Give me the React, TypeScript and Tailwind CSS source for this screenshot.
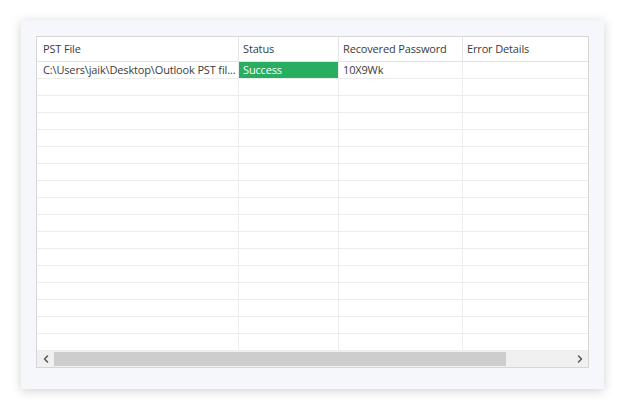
import { ChevronLeft, ChevronRight } from 'lucide-react'

export default function App() {
  const columns = [
    { title: 'PST File', width: 'w-[202px]', pad: 'pl-[6px]' },
    { title: 'Status', width: 'w-[100px]', pad: 'pl-[4px]' },
    { title: 'Recovered Password', width: 'w-[124px]', pad: 'pl-[4px]' },
    { title: 'Error Details', width: 'flex-1', pad: 'pl-[4px]' },
  ]
  const emptyRows = Array.from({ length: 16 })

  return (
    <div className="w-[624px] h-[409px] bg-white pt-[20px] pl-[21px] font-['Open_Sans',sans-serif] text-[11px] tracking-[-0.15px] text-[#3b3b3b]">
      <div className="w-[583px] h-[369px] bg-[#f6f7fa] shadow-[0_2px_10px_rgba(0,0,0,0.18)] pt-[16px] pl-[15px]">
        <div className="w-[553px] h-[332px] border border-[#d6d6d6] bg-white flex flex-col">
          {/* header */}
          <div className="flex h-[25px] shrink-0 border-b border-[#e3e3e3]">
            {columns.map((c, i) => (
              <div
                key={i}
                className={`${c.width} ${c.pad} ${i < 3 ? 'border-r border-[#e6e6e6]' : ''} flex items-center pt-[1px]`}
              >
                {c.title}
              </div>
            ))}
          </div>

          {/* rows */}
          <div className="flex-1 overflow-hidden">
            <div className="flex h-[17px] border-b border-[#ececec]">
              <div className="w-[202px] border-r border-[#ececec] flex items-center pl-[6px] pt-[1px] whitespace-nowrap overflow-hidden">
                C:\Users\jaik\Desktop\Outlook PST fil...
              </div>
              <div className="w-[100px] border-r border-[#ececec] bg-[#27ae60] text-white flex items-center pl-[4px] pt-[1px]">
                Success
              </div>
              <div className="w-[124px] border-r border-[#ececec] flex items-center pl-[4px] pt-[1px]">10X9Wk</div>
              <div className="flex-1" />
            </div>
            {emptyRows.map((_, i) => (
              <div key={i} className="flex h-[17px] border-b border-[#ececec]">
                <div className="w-[202px] border-r border-[#ececec]" />
                <div className="w-[100px] border-r border-[#ececec]" />
                <div className="w-[124px] border-r border-[#ececec]" />
                <div className="flex-1" />
              </div>
            ))}
          </div>

          {/* horizontal scrollbar */}
          <div className="h-[16px] shrink-0 flex bg-[#f0f0f0]">
            <div className="w-[17px] flex items-center justify-center text-[#555]">
              <ChevronLeft size={12} strokeWidth={3} />
            </div>
            <div className="flex-1 flex items-stretch py-[1px]">
              <div className="w-[452px] bg-[#cdcdcd]" />
            </div>
            <div className="w-[17px] flex items-center justify-center text-[#555]">
              <ChevronRight size={12} strokeWidth={3} />
            </div>
          </div>
        </div>
      </div>
    </div>
  )
}
